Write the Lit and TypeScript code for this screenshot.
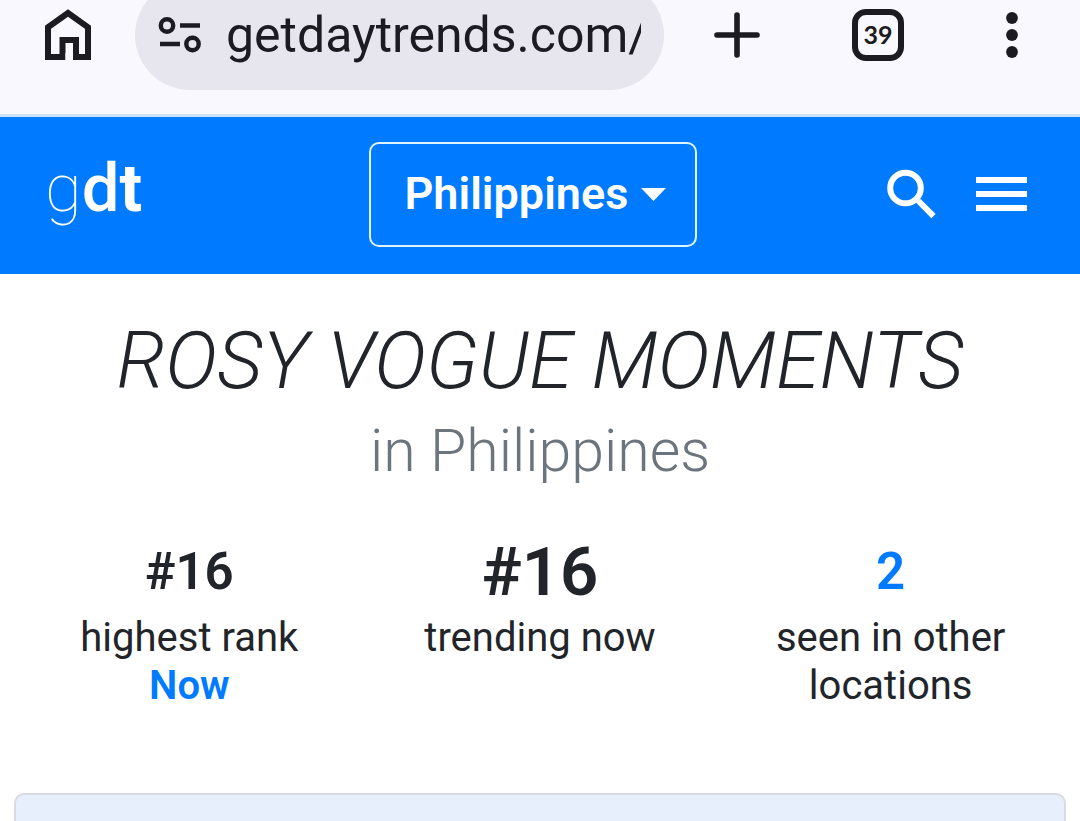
import { LitElement, html, css, svg } from "lit";
import { customElement } from "lit/decorators.js";

const homeIcon = svg`<svg class="icon" width="46" height="52" viewBox="0 0 46 52" fill="none" stroke="currentColor" stroke-width="6" aria-hidden="true">
  <path d="M3 18.2 23 4l20 14.2V48H31V31H17.500V48H3Z" /><path d="M20.500 44v8h5v-8Z" fill="#f9f8fe" stroke="none" /></svg>`;

const siteIcon = svg`<svg class="icon" width="44" height="36" viewBox="0 0 44 36" fill="none" stroke="currentColor" stroke-width="4.400" aria-hidden="true">
  <circle cx="9" cy="8.500" r="6.200" /><path d="M22 8.500h20M2 27h20" /><circle cx="34.500" cy="27" r="6.200" /></svg>`;

const plusIcon = svg`<svg class="icon" width="46" height="46" viewBox="0 0 46 46" fill="none" stroke="currentColor" stroke-width="5.600" stroke-linecap="round" aria-hidden="true">
  <path d="M23 3v40M3 23h40" /></svg>`;

const dotsIcon = svg`<svg class="icon" width="12" height="46" viewBox="0 0 12 46" fill="currentColor" aria-hidden="true">
  <circle cx="6" cy="6" r="5.900" /><circle cx="6" cy="23" r="5.900" /><circle cx="6" cy="40" r="5.900" /></svg>`;

const searchIcon = svg`<svg class="icon" width="50" height="50" viewBox="0 0 50 50" fill="none" stroke="currentColor" stroke-width="6" aria-hidden="true">
  <circle cx="18.500" cy="19" r="15.300" /><path d="M28.500 29.500l3 3" stroke-width="4" /><path d="M31.500 32l15 15.200" /></svg>`;

const menuIcon = svg`<svg class="icon" width="51" height="34" viewBox="0 0 51 34" fill="currentColor" aria-hidden="true">
  <path d="M0 0h51v6H0zM0 14h51v6H0zM0 28h51v6H0z" /></svg>`;

@customElement("browser-bar")
export class BrowserBar extends LitElement {
  static styles = css`
    :host {
      display: block;
      overflow: hidden;
      background: #f9f8fe;
      border-bottom: 3px solid #cde4f8;
      color: #1b1b21;
    }
    .row {
      display: flex;
      align-items: center;
      margin-top: -20px;
      padding: 0 52px 24px 45px;
    }
    .icon { display: block; }
    button {
      padding: 0;
      border: 0;
      background: none;
      color: inherit;
      font: inherit;
      cursor: pointer;
    }
    .address {
      flex: 1;
      min-width: 0;
      display: flex;
      align-items: center;
      gap: 24px;
      height: 110px;
      margin: 0 50px 0 44px;
      padding: 0 23px;
      box-sizing: border-box;
      border-radius: 55px;
      background: #e7e5ee;
    }
    .url {
      flex: 1;
      min-width: 0;
      height: 72px;
      padding: 0;
      border: 0;
      outline: 0;
      background: none;
      color: inherit;
      font: 400 50px/72px Roboto, sans-serif;
    }
    .actions {
      display: flex;
      align-items: center;
      gap: 92px;
    }
    .tabs {
      width: 52px;
      height: 52px;
      padding-bottom: 2px;
      border: 6px solid currentColor;
      border-radius: 14px;
      font: 700 25px/38px Lato, sans-serif;
    }
    .more {
      display: flex;
      justify-content: center;
      width: 32px;
    }
  `;

  render() {
    return html`<div class="row">
      <button aria-label="Home">${homeIcon}</button>
      <div class="address">
        ${siteIcon}
        <input class="url" type="text" aria-label="Address" value="getdaytrends.com/" />
      </div>
      <div class="actions">
        <button aria-label="New tab">${plusIcon}</button>
        <button class="tabs" aria-label="Open tabs">39</button>
        <button class="more" aria-label="More">${dotsIcon}</button>
      </div>
    </div>`;
  }
}

@customElement("site-header")
export class SiteHeader extends LitElement {
  static styles = css`
    :host {
      display: grid;
      grid-template-columns: 1fr auto 1fr;
      align-items: center;
      padding: 25px 53px 27px 38px;
      background: #007bff;
      color: #fff;
    }
    .icon { display: block; }
    .logo {
      padding: 0 0 14px 7px;
      color: inherit;
      font-size: 67px;
      line-height: 80px;
      text-decoration: none;
    }
    .thin { font-weight: 100; }
    .medium { font-weight: 500; }
    .bold { font-weight: 700; }
    .picker {
      display: grid;
      align-items: center;
    }
    .country, .caret { grid-area: 1 / 1; }
    .country {
      appearance: none;
      height: 105px;
      margin: 0;
      padding: 0 66px 2px 34px;
      border: 2px solid #dff6ff;
      border-radius: 10px;
      background: none;
      color: inherit;
      font: 600 45px/60px Roboto, sans-serif;
    }
    .caret {
      justify-self: end;
      margin-right: 31px;
      pointer-events: none;
    }
    .tools {
      display: flex;
      justify-content: flex-end;
      align-items: center;
      gap: 39px;
      padding-bottom: 2px;
    }
    button {
      padding: 0;
      border: 0;
      background: none;
      color: inherit;
      cursor: pointer;
    }
  `;

  render() {
    return html`
      <a class="logo" href="#" aria-label="gdt"><span class="thin">g</span><span class="medium">d</span><span class="bold">t</span></a>
      <div class="picker">
        <select class="country" aria-label="Location"><option>Philippines</option></select>
        <svg class="caret" width="25" height="13" viewBox="0 0 25 13" fill="currentColor" aria-hidden="true"><path d="M0 0h25L12.500 13z" /></svg>
      </div>
      <div class="tools">
        <button aria-label="Search">${searchIcon}</button>
        <button aria-label="Menu">${menuIcon}</button>
      </div>`;
  }
}

@customElement("app-root")
export class AppRoot extends LitElement {
  static styles = css`
    :host {
      display: flex;
      flex-direction: column;
      height: 100vh;
      overflow: hidden;
      background: #fff;
      color: #212529;
      font-family: Roboto, sans-serif;
    }
    main {
      flex: 1;
      display: flex;
      flex-direction: column;
      padding: 39px 14px 0;
      text-align: center;
    }
    h1 {
      margin: 0;
      font-size: 79px;
      line-height: 96px;
      font-weight: 300;
      font-style: italic;
    }
    .place {
      margin: 6px 0 0;
      color: #6c757d;
      font-size: 59px;
      line-height: 72px;
      font-weight: 300;
    }
    .stats {
      display: grid;
      grid-template-columns: repeat(3, 1fr);
      margin-top: 48px;
      font-size: 40px;
      line-height: 48px;
    }
    .stat { padding: 0 40px; }
    .value {
      display: block;
      margin-bottom: 5px;
      font-size: 51px;
      line-height: 74px;
      font-weight: 600;
    }
    .lead { font-size: 67px; }
    .label { display: block; }
    a {
      color: #007bff;
      font-weight: 600;
      text-decoration: none;
    }
    .card {
      flex: 1;
      margin-top: 83px;
      border: 2px solid #d8dbe0;
      border-bottom: 0;
      border-radius: 10px 10px 0 0;
      background: #e8effc;
    }
  `;

  render() {
    return html`
      <browser-bar></browser-bar>
      <site-header></site-header>
      <main>
        <h1>ROSY VOGUE MOMENTS</h1>
        <p class="place">in Philippines</p>
        <div class="stats">
          <div class="stat">
            <span class="value">#16</span>
            <span class="label">highest rank</span>
            <a href="#">Now</a>
          </div>
          <div class="stat">
            <span class="value lead">#16</span>
            <span class="label">trending now</span>
          </div>
          <div class="stat">
            <a class="value" href="#">2</a>
            <span class="label">seen in other locations</span>
          </div>
        </div>
        <section class="card"></section>
      </main>`;
  }
}
